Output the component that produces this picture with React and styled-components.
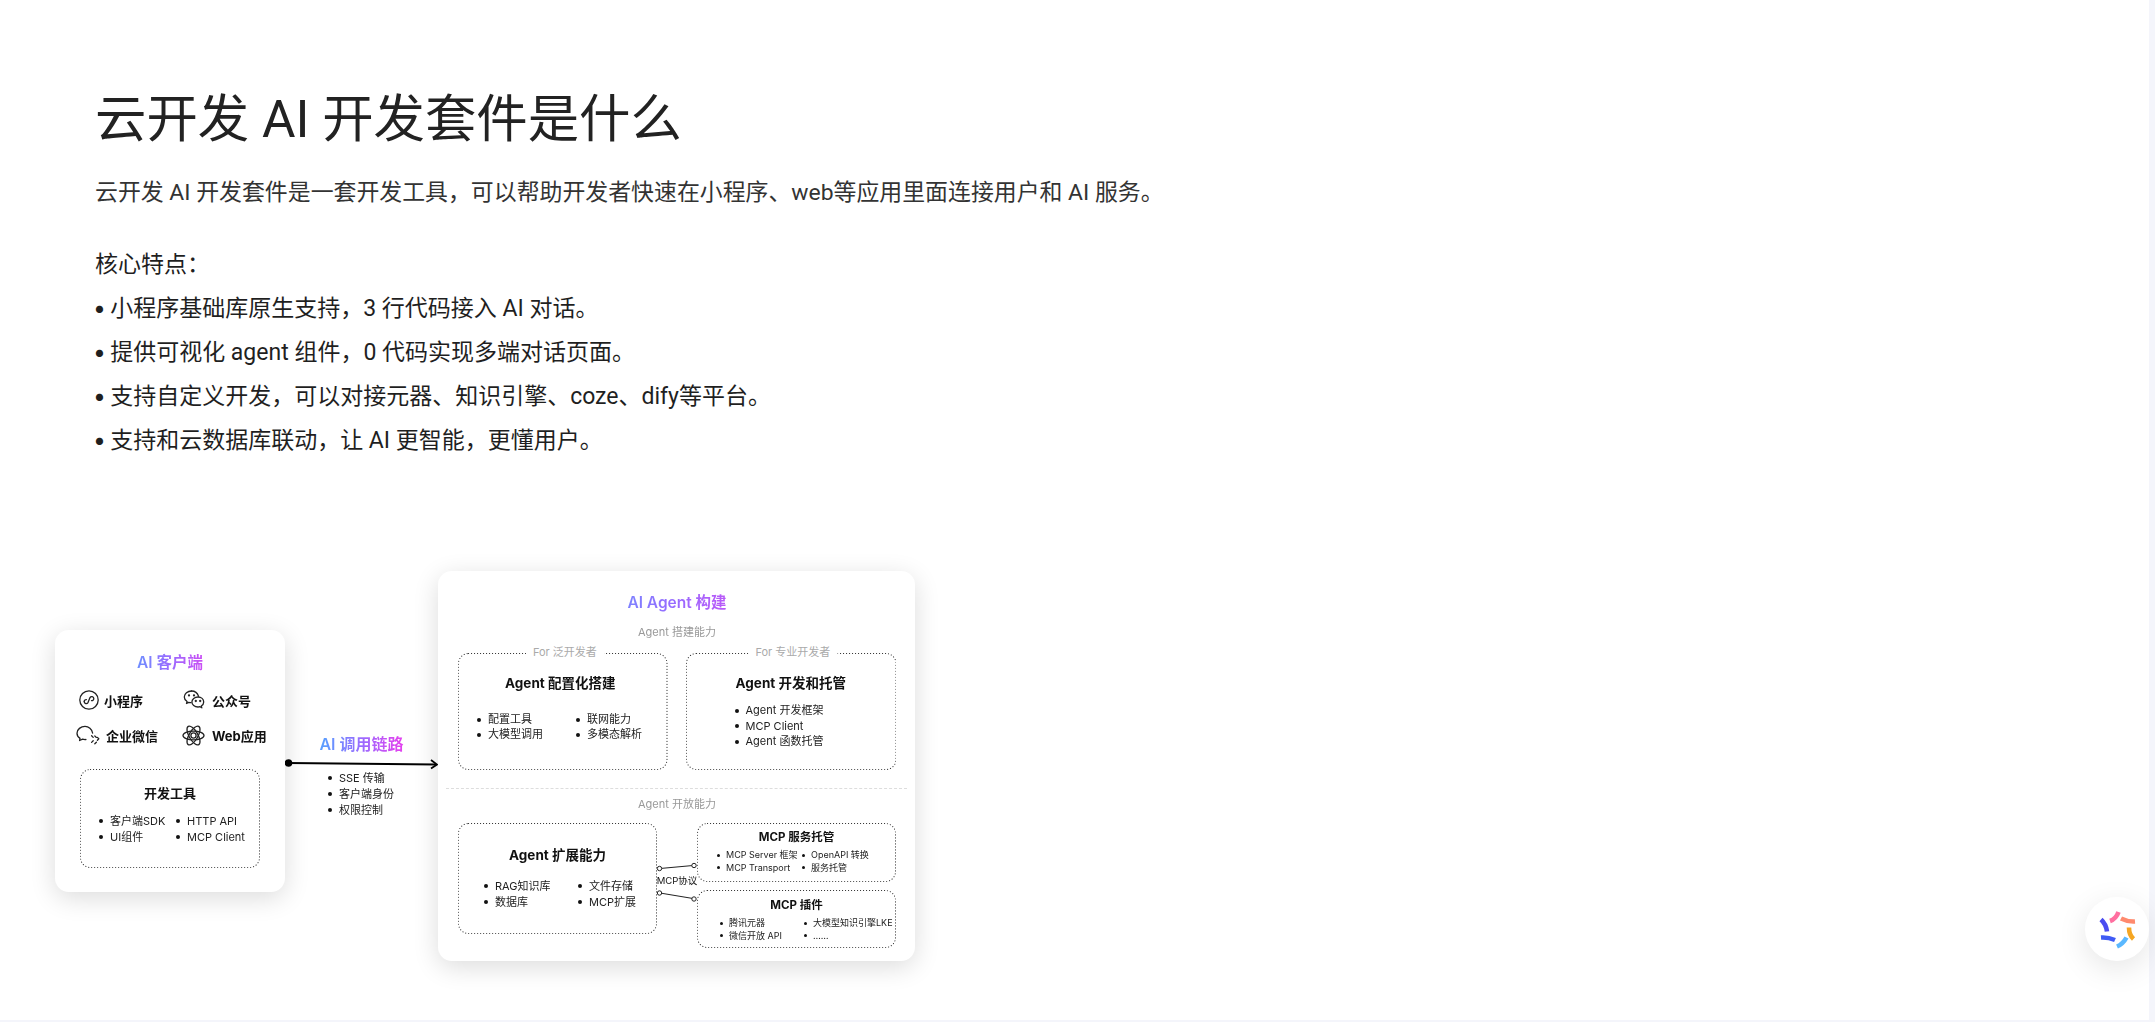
import React from "react";
import styled, { createGlobalStyle } from "styled-components";

const GlobalStyle = createGlobalStyle`
  html, body {
    margin: 0;
    padding: 0;
    background: #f4f5fb;
    overflow: hidden;
  }
  * {
    box-sizing: border-box;
  }
`;

const Main = styled.main`
  width: 2149px;
  height: 1020px;
  background: #fff;
  padding: 84px 0 0 55px;
  overflow: hidden;
  font-family: Roboto, "Noto Sans CJK SC", sans-serif;
`;

const Article = styled.article`
  padding-left: 40px;
`;

const Title = styled.h1`
  margin: 0 0 15px;
  font-size: 51.4px;
  line-height: 72px;
  font-weight: 400;
  color: #222;
`;

const Para = styled.p`
  margin: 0 0 ${(p) => p.$after || 0}px;
  font-size: ${(p) => p.$size || 23}px;
  line-height: 44px;
  color: ${(p) => p.$color || "#1f1f1f"};
`;

const Mark = styled.span`
  margin: 0 -1.5px 0 -2px;
  font-family: Inter, sans-serif;
  line-height: 0;
`;

const Diagram = styled.section`
  display: flex;
  align-items: flex-start;
  margin-top: 108px;
  font-family: Inter, "Noto Sans CJK SC", sans-serif;
  color: #111;
  filter: blur(0.35px);
`;

const Card = styled.div`
  background: #fff;
  border-radius: 14px;
  box-shadow: 0 6px 26px rgba(0, 0, 0, 0.14);
`;

const ClientCard = styled(Card)`
  width: 230px;
  height: 262px;
  margin-top: 59px;
  padding: 23px 0 0 21px;
`;

const GradientTitle = styled.div`
  font-size: ${(p) => p.$size || 15.5}px;
  line-height: 20px;
  font-weight: 600;
  text-align: center;
  width: ${(p) => p.$width || "auto"};
  background: linear-gradient(90deg, #5b9dff 25%, #9a6bff 50%, #e044f0 75%);
  -webkit-background-clip: text;
  background-clip: text;
  color: transparent;
`;

const ClientGrid = styled.div`
  display: grid;
  grid-template-columns: 106px 1fr;
  grid-auto-rows: 24px;
  row-gap: 11px;
  margin-top: 15px;
`;

const ClientItem = styled.div`
  display: flex;
  align-items: center;
  gap: ${(p) => p.$gap}px;
  padding-left: ${(p) => p.$indent || 0}px;
  font-size: 13px;
  font-weight: 700;
  white-space: nowrap;
`;

const Box = styled.div`
  position: relative;
  width: ${(p) => p.$w}px;
  height: ${(p) => p.$h}px;
  padding-top: ${(p) => p.$top}px;
`;

const ToolBox = styled(Box)`
  margin: 22px 0 0 4px;
`;

const FrameSvg = styled.svg`
  position: absolute;
  inset: 0;
  width: 100%;
  height: 100%;
  fill: none;
  stroke: #333;
  stroke-width: 1.1;
  stroke-linecap: round;
  stroke-dasharray: 0.1 2.9;

  rect {
    x: 0.5px;
    y: 0.5px;
    width: calc(100% - 1px);
    height: calc(100% - 1px);
    rx: 10px;
  }
`;

const Frame = () => (
  <FrameSvg aria-hidden="true">
    <rect />
  </FrameSvg>
);

const BoxTitle = styled.div`
  font-size: ${(p) => p.$size || 13.5}px;
  line-height: ${(p) => p.$line || 18}px;
  font-weight: 700;
  text-align: center;
  padding-right: ${(p) => p.$nudge || 0}px;
  white-space: nowrap;
`;

const Columns = styled.div`
  display: grid;
  grid-template-columns: ${(p) => p.$first}px 1fr;
  margin-top: ${(p) => p.$mt}px;
  padding-left: ${(p) => p.$pad}px;
`;

const Bullets = styled.ul`
  list-style: none;
  margin: ${(p) => p.$mt || 0}px 0 0;
  padding: 0 0 0 ${(p) => p.$pad || 0}px;
  font-size: ${(p) => p.$size || 11}px;
  line-height: ${(p) => p.$line || 16}px;
  color: #222;
  white-space: nowrap;

  li {
    display: flex;
    align-items: center;
    gap: ${(p) => (p.$size ? 6 : 7)}px;
  }
  li::before {
    content: "";
    flex: none;
    width: ${(p) => (p.$size ? 3 : 4)}px;
    height: ${(p) => (p.$size ? 3 : 4)}px;
    border-radius: 50%;
    background: #111;
  }
`;

const LinkColumn = styled.div`
  width: 153px;
  margin-top: 163px;
`;

const ArrowSvg = styled.svg`
  display: block;
  width: 153px;
  height: 12px;
  margin-top: 4px;
`;

const AgentCard = styled(Card)`
  width: 477px;
  height: 390px;
  padding: 22px 19px 13px 20px;
`;

const SubTitle = styled.div`
  margin-top: ${(p) => p.$mt}px;
  font-size: 11px;
  line-height: 16px;
  text-align: center;
  color: #999;
`;

const BoxRow = styled.div`
  display: flex;
  gap: 18px;
  margin-top: 13px;
`;

const Legend = styled.span`
  position: absolute;
  top: -9px;
  left: 51%;
  transform: translateX(-50%);
  padding: 0 7px;
  background: #fff;
  font-size: 11px;
  line-height: 16px;
  color: #aaa;
  white-space: nowrap;
`;

const Divider = styled.div`
  margin: 18px -11px 0 -12px;
  border-top: 1px dashed #ddd;
`;

const OpenRow = styled.div`
  display: flex;
  margin-top: 11px;
`;

const Bridge = styled.div`
  width: 40px;
  display: flex;
  flex-direction: column;
  align-items: center;
  padding-top: 38px;
`;

const BridgeLine = styled.svg`
  display: block;
  width: 40px;
  height: 12px;
`;

const BridgeLabel = styled.div`
  font-size: 9.5px;
  line-height: 14px;
  margin: 1px 0 2px;
  white-space: nowrap;
`;

const McpColumn = styled.div`
  display: flex;
  flex-direction: column;
  gap: 8px;
`;

const Widget = styled.button`
  position: fixed;
  right: 6px;
  bottom: 61px;
  width: 64px;
  height: 64px;
  padding: 0;
  border: 0;
  border-radius: 50%;
  background: #fff;
  box-shadow: 0 8px 30px rgba(0, 0, 0, 0.1);
`;

const WidgetLogo = styled.svg`
  display: block;
  width: 64px;
  height: 64px;
  fill: none;
  stroke-width: 4.6;
`;

const LineIcon = styled.svg`
  display: block;
  flex: none;
  width: ${(p) => p.$size}px;
  height: ${(p) => p.$size}px;
  fill: none;
  stroke: #222;
  stroke-width: 1.3;
  stroke-linecap: round;
  stroke-linejoin: round;
`;

const MiniProgramIcon = () => (
  <LineIcon $size={20} viewBox="0 0 20 20">
    <circle cx="10" cy="10" r="9.2" />
    <path d="M5.2 11.600c0 2 2.600 2.800 3.800 1l2-5c1-1.800 3.800-1 3.800 1 0 1.400-1.200 2.200-2.300 2" />
    <path d="M5.200 11.600c0-1.200 1-2 2.200-2" />
  </LineIcon>
);

const OfficialIcon = () => (
  <LineIcon $size={22} viewBox="0 0 22 22">
    <path d="M8.500 2C4.600 2 1.300 4.600 1.300 7.900c0 1.900 1.100 3.500 2.800 4.600l-.6 2 2.300-1.200c.7.2 1.400.3 2.200.3" />
    <path d="M15.600 7.400C14.600 4.300 11.800 2 8.500 2" />
    <path d="M15 8c-3.400 0-6.100 2.200-6.100 5s2.700 5 6.100 5c.7 0 1.300-.1 1.900-.3l1.900 1.100-.5-1.800c1.400-.9 2.400-2.400 2.400-4 0-2.800-2.400-5-5.700-5z" />
    <circle cx="6" cy="6.400" r=".5" />
    <circle cx="11" cy="6.400" r=".5" />
    <circle cx="12.800" cy="12" r=".5" />
    <circle cx="17.200" cy="12" r=".5" />
  </LineIcon>
);

const WorkIcon = () => (
  <LineIcon $size={24} viewBox="0 0 24 24">
    <path d="M16.600 10c-.6-4-4-6.600-7.600-6.600C4.800 3.400 1 6.400 1 10.200c0 2.200 1.300 4 3 5.200l-.4 2.100 3-1.300c1 .3 2.100.4 3.300.3" />
    <path d="M15.600 12.800l1.600 1.600M21.400 14.400l1.400 1.400-1.400 1.400M15.600 19.400l1.600-1.600M18.800 20.800l1.600-1.600M18.800 13l1.600 1.400" />
  </LineIcon>
);

const WebIcon = () => (
  <LineIcon $size={23} viewBox="0 0 23 23">
    <ellipse cx="11.500" cy="11.500" rx="10.500" ry="4.400" />
    <ellipse cx="11.500" cy="11.500" rx="10.500" ry="4.400" transform="rotate(60 11.500 11.500)" />
    <ellipse cx="11.500" cy="11.500" rx="10.500" ry="4.400" transform="rotate(120 11.500 11.500)" />
    <circle cx="11.500" cy="11.500" r="2.600" />
  </LineIcon>
);

export default function App() {
  return (
    <>
      <GlobalStyle />
      <Main>
        <Article>
          <Title>云开发 AI 开发套件是什么</Title>
          <Para $after={28} $color="#333" $size={22.9}>
            云开发 AI 开发套件是一套开发工具，可以帮助开发者快速在小程序、web等应用里面连接用户和 AI 服务。
          </Para>
          <Para>核心特点：</Para>
          <Para><Mark>•</Mark> 小程序基础库原生支持，3 行代码接入 AI 对话。</Para>
          <Para><Mark>•</Mark> 提供可视化 agent 组件，0 代码实现多端对话页面。</Para>
          <Para><Mark>•</Mark> 支持自定义开发，可以对接元器、知识引擎、coze、dify等平台。</Para>
          <Para><Mark>•</Mark> 支持和云数据库联动，让 AI 更智能，更懂用户。</Para>
        </Article>

        <Diagram>
          <ClientCard>
            <GradientTitle $width="188px">AI 客户端</GradientTitle>
            <ClientGrid>
              <ClientItem $indent={3} $gap={5}>
                <MiniProgramIcon />
                小程序
              </ClientItem>
              <ClientItem $indent={1} $gap={7}>
                <OfficialIcon />
                公众号
              </ClientItem>
              <ClientItem $gap={6}>
                <WorkIcon />
                企业微信
              </ClientItem>
              <ClientItem $gap={7}>
                <WebIcon />
                Web应用
              </ClientItem>
            </ClientGrid>
            <ToolBox $w={180} $h={99} $top={15}>
              <Frame />
              <BoxTitle $size={13}>开发工具</BoxTitle>
              <Columns $first={77} $mt={11} $pad={19}>
                <Bullets>
                  <li>客户端SDK</li>
                  <li>UI组件</li>
                </Bullets>
                <Bullets>
                  <li>HTTP API</li>
                  <li>MCP Client</li>
                </Bullets>
              </Columns>
            </ToolBox>
          </ClientCard>

          <LinkColumn>
            <GradientTitle $size={16}>AI 调用链路</GradientTitle>
            <ArrowSvg viewBox="0 0 153 12">
              <circle cx="3.500" cy="5" r="3.800" fill="#000" />
              <path d="M3 5L151 6.500" stroke="#000" strokeWidth="1.800" fill="none" />
              <path d="M146 2L152 6.500L146 10.500" stroke="#000" strokeWidth="1.800" fill="none" />
            </ArrowSvg>
            <Bullets $pad={43}>
              <li>SSE 传输</li>
              <li>客户端身份</li>
              <li>权限控制</li>
            </Bullets>
          </LinkColumn>

          <AgentCard>
            <GradientTitle>AI Agent 构建</GradientTitle>
            <SubTitle $mt={11}>Agent 搭建能力</SubTitle>
            <BoxRow>
              <Box $w={210} $h={117} $top={21}>
                <Frame />
                <Legend>For 泛开发者</Legend>
                <BoxTitle $nudge={5}>Agent 配置化搭建</BoxTitle>
                <Columns $first={99} $mt={20} $pad={19}>
                  <Bullets $line={15}>
                    <li>配置工具</li>
                    <li>大模型调用</li>
                  </Bullets>
                  <Bullets $line={15}>
                    <li>联网能力</li>
                    <li>多模态解析</li>
                  </Bullets>
                </Columns>
              </Box>
              <Box $w={211} $h={117} $top={21}>
                <Frame />
                <Legend>For 专业开发者</Legend>
                <BoxTitle>Agent 开发和托管</BoxTitle>
                <Bullets $mt={11} $pad={49} $line={15.500}>
                  <li>Agent 开发框架</li>
                  <li>MCP Client</li>
                  <li>Agent 函数托管</li>
                </Bullets>
              </Box>
            </BoxRow>
            <Divider />
            <SubTitle $mt={7}>Agent 开放能力</SubTitle>
            <OpenRow>
              <Box $w={199} $h={111} $top={23}>
                <Frame />
                <BoxTitle>Agent 扩展能力</BoxTitle>
                <Columns $first={94} $mt={14} $pad={26}>
                  <Bullets>
                    <li>RAG知识库</li>
                    <li>数据库</li>
                  </Bullets>
                  <Bullets>
                    <li>文件存储</li>
                    <li>MCP扩展</li>
                  </Bullets>
                </Columns>
              </Box>
              <Bridge>
                <BridgeLine viewBox="0 0 40 12">
                  <path d="M3 7.500L36 4.500" stroke="#222" strokeWidth="1" />
                  <circle cx="2.500" cy="7.500" r="2.200" fill="#fff" stroke="#222" />
                  <circle cx="37" cy="4.500" r="2.200" fill="#fff" stroke="#222" />
                </BridgeLine>
                <BridgeLabel>MCP协议</BridgeLabel>
                <BridgeLine viewBox="0 0 40 12">
                  <path d="M3 3L36 8.500" stroke="#222" strokeWidth="1" />
                  <circle cx="2.500" cy="3" r="2.200" fill="#fff" stroke="#222" />
                  <circle cx="37" cy="9" r="2.200" fill="#fff" stroke="#222" />
                </BridgeLine>
              </Bridge>
              <McpColumn>
                <Box $w={199} $h={59} $top={6}>
                  <Frame />
                  <BoxTitle $size={11.500} $line={16}>MCP 服务托管</BoxTitle>
                  <Columns $first={85} $mt={4} $pad={20}>
                    <Bullets $size={9} $line={12.500}>
                      <li>MCP Server 框架</li>
                      <li>MCP Transport</li>
                    </Bullets>
                    <Bullets $size={9} $line={12.500}>
                      <li>OpenAPI 转换</li>
                      <li>服务托管</li>
                    </Bullets>
                  </Columns>
                </Box>
                <Box $w={199} $h={58} $top={7}>
                  <Frame />
                  <BoxTitle $size={11.500} $line={16}>MCP 插件</BoxTitle>
                  <Columns $first={84} $mt={4} $pad={23}>
                    <Bullets $size={9} $line={12.500}>
                      <li>腾讯元器</li>
                      <li>微信开放 API</li>
                    </Bullets>
                    <Bullets $size={9} $line={12.500}>
                      <li>大模型知识引擎LKE</li>
                      <li>……</li>
                    </Bullets>
                  </Columns>
                </Box>
              </McpColumn>
            </OpenRow>
          </AgentCard>
        </Diagram>
      </Main>

      <Widget aria-label="AI 助手">
        <WidgetLogo viewBox="0 0 64 64">
          <path d="M16 22.500Q21 27 22 34.500" stroke="#4a4df0" />
          <path d="M25 24Q31 22 33.500 15" stroke="#ff6fa0" />
          <path d="M36 21.500Q43 25 50 24.500" stroke="#ff8a6e" />
          <path d="M44 30.500Q44 38 48.500 42" stroke="#f5a623" />
          <path d="M32 49.500Q38 47 41.500 40.500" stroke="#5ab8ff" />
          <path d="M16 40.500Q23 40 30 43" stroke="#3f5bf5" />
        </WidgetLogo>
      </Widget>
    </>
  );
}
